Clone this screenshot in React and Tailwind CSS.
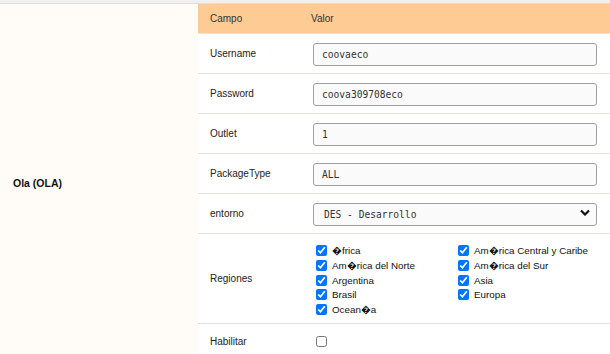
const fields = [
  { label: "Username", value: "coovaeco" },
  { label: "Password", value: "coova309708eco" },
  { label: "Outlet", value: "1" },
  { label: "PackageType", value: "ALL" },
];

const regiones = [
  "\uFFFDfrica",
  "Am\uFFFDrica Central y Caribe",
  "Am\uFFFDrica del Norte",
  "Am\uFFFDrica del Sur",
  "Argentina",
  "Asia",
  "Brasil",
  "Europa",
  "Ocean\uFFFDa",
];

const mono = "font-['DejaVu_Sans_Mono',monospace] text-[9.6px] text-[#333]";

function Row({ label, children, className = "h-[40px]" }) {
  return (
    <div className={`grid grid-cols-[107px_1fr] items-center border-b border-[#e6e0da] ${className}`}>
      <div className="pl-3 text-[10px] text-[#222]">{label}</div>
      <div className="pl-2 pr-[13px]">{children}</div>
    </div>
  );
}

export default function App() {
  return (
    <div className="w-[610px] h-[354px] overflow-hidden bg-white font-['Liberation_Sans',sans-serif]">
      <div className="h-[3px] bg-[#f2f0ee]" />
      <div className="h-px bg-[#e2deda]" />
      <div className="flex">
        <div className="w-[198px] bg-[#fffbf6] flex items-center pl-[13px] pt-[6px]">
          <span className="text-[10.5px] font-bold text-[#111]">Ola (OLA)</span>
        </div>
        <div className="flex-1">
          <div className="grid grid-cols-[107px_1fr] items-center h-[30px] bg-[#fecb95] border-b border-[#ece4dc] text-[10px] text-[#333]">
            <div className="pl-3">Campo</div>
            <div className="pl-[6px]">Valor</div>
          </div>
          {fields.map((f) => (
            <Row key={f.label} label={f.label}>
              <input
                readOnly
                value={f.value}
                className={`w-full h-[23px] rounded-[3px] border border-[#9f9f9f] bg-[#fafafa] px-2 outline-none ${mono}`}
              />
            </Row>
          ))}
          <Row label="entorno">
            <div className="relative">
              <select
                defaultValue="DES"
                className={`w-full h-[23px] appearance-none rounded-[3px] border border-[#9f9f9f] bg-[#fafafa] pl-[10px] outline-none ${mono}`}
              >
                <option value="DES">DES - Desarrollo</option>
              </select>
              <svg className="absolute right-[7px] top-[8px] w-[10px] h-[7px]" viewBox="0 0 10 7">
                <path d="M1 1.5 L5 5.5 L9 1.5" fill="none" stroke="#111" strokeWidth="2.2" />
              </svg>
            </div>
          </Row>
          <Row label="Regiones" className="h-[90px]">
            <div className="grid grid-cols-[142px_1fr] gap-y-[3.7px] pl-[3px] pt-[3px]">
              {regiones.map((r) => (
                <label key={r} className="flex items-center gap-[5px] text-[9.8px] text-[#111] leading-[11px]">
                  <input type="checkbox" defaultChecked className="w-[11px] h-[11px] m-0 accent-[#0075ff]" />
                  <span>{r}</span>
                </label>
              ))}
            </div>
          </Row>
          <div className="grid grid-cols-[107px_1fr] items-center h-[34px]">
            <div className="pl-3 text-[10px] text-[#222]">Habilitar</div>
            <div className="pl-[11px] flex items-center">
              <input type="checkbox" className="w-[11px] h-[11px] m-0" />
            </div>
          </div>
        </div>
      </div>
    </div>
  );
}
